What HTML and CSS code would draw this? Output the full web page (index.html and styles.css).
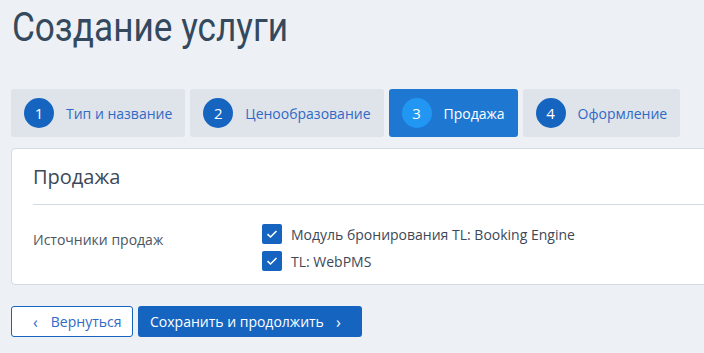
FILE: index.html
```html
<!DOCTYPE html>
<html lang="ru">
<head>
    <meta charset="utf-8">
    <meta name="viewport" content="width=device-width, initial-scale=1.0">
    <title>Создание услуги</title>
    <link rel="stylesheet" href="styles.css">
</head>
<body>
    <h1 class="page-title">Создание услуги</h1>

    <div class="steps">
        <div class="step"><span class="step-num">1</span>Тип и название</div>
        <div class="step"><span class="step-num">2</span>Ценообразование</div>
        <div class="step active"><span class="step-num">3</span>Продажа</div>
        <div class="step"><span class="step-num">4</span>Оформление</div>
    </div>

    <div class="card">
        <h2 class="card-title">Продажа</h2>
        <div class="row">
            <div class="row-label">Источники продаж</div>
            <div class="row-value">
                <label class="check">
                    <span class="box"><svg width="12" height="10" viewBox="0 0 12 10"><path d="M1.5 5.2 L4.5 8 L10.5 2" fill="none" stroke="#fff" stroke-width="1.6"/></svg></span>
                    Модуль бронирования TL: Booking Engine
                </label>
                <label class="check">
                    <span class="box"><svg width="12" height="10" viewBox="0 0 12 10"><path d="M1.5 5.2 L4.5 8 L10.5 2" fill="none" stroke="#fff" stroke-width="1.6"/></svg></span>
                    TL: WebPMS
                </label>
            </div>
        </div>
    </div>

    <div class="actions">
        <a class="btn btn-back"><span class="chev">&#8249;</span>Вернуться</a>
        <a class="btn btn-next">Сохранить и продолжить<span class="chev">&#8250;</span></a>
    </div>
</body>
</html>
```

FILE: styles.css
```css
html, body {
    margin: 0;
    overflow: hidden;
}
body {
    background-color: #edf1f5;
    font-family: "Open Sans", "Noto Sans", sans-serif;
    font-size: 14px;
    color: #3c4858;
    padding: 0 0 0 11px;
    width: 740px;
}

.page-title {
    font-family: Roboto, sans-serif;
    font-weight: 400;
    font-size: 40px;
    color: #34495e;
    margin: 0;
    padding: 4px 0 0 1px;
    height: 85px;
    transform: scaleX(0.88);
    transform-origin: left top;
}

.steps {
    display: flex;
    gap: 5px;
}
.step {
    display: flex;
    align-items: center;
    gap: 12px;
    height: 48px;
    padding: 0 13px;
    background-color: #dfe3ea;
    border-radius: 3px;
    color: #2f6ac6;
    font-size: 14px;
}
.step-num {
    width: 30px;
    height: 30px;
    border-radius: 50%;
    background-color: #1565c0;
    color: #fff;
    display: flex;
    align-items: center;
    justify-content: center;
    font-size: 15px;
}
.step.active {
    background-color: #1e78d2;
    color: #fff;
}
.step.active .step-num {
    background-color: #2196f3;
}

.card {
    margin-top: 11px;
    background: #fff;
    border: 1px solid #d3dae3;
    border-radius: 4px;
    padding: 0 0 13px 21px;
}
.card-title {
    font-weight: 400;
    font-size: 20px;
    color: #3c4858;
    margin: 0;
    padding: 14px 0 14px;
    border-bottom: 1px solid #d3dae3;
    line-height: 27px;
}
.row {
    display: flex;
    padding-top: 19px;
}
.row-label {
    width: 229px;
    padding-top: 6px;
    color: #4a5563;
}
.row-value {
    display: flex;
    flex-direction: column;
    gap: 7px;
}
.check {
    display: flex;
    align-items: center;
    gap: 9px;
    color: #3c4858;
    height: 20px;
}
.box {
    width: 20px;
    height: 20px;
    border-radius: 2px;
    background-color: #1565c0;
    display: flex;
    align-items: center;
    justify-content: center;
}

.actions {
    display: flex;
    gap: 5px;
    margin-top: 21px;
}
.btn {
    display: flex;
    align-items: center;
    height: 31px;
    box-sizing: border-box;
    border-radius: 3px;
    font-size: 14px;
    cursor: pointer;
}
.btn-back {
    width: 122px;
    border: 1px solid #1565c0;
    background: #fff;
    color: #2f6ac6;
    padding-left: 21px;
}
.btn-back .chev {
    margin-right: 13px;
    font-size: 16px;
}
.btn-next {
    width: 224px;
    background: #1565c0;
    color: #fff;
    padding-left: 12px;
}
.btn-next .chev {
    margin-left: 12px;
    font-size: 16px;
}
```
